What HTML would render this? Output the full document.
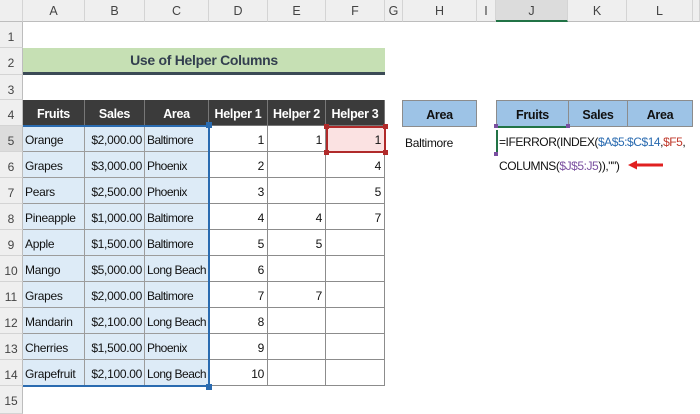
<!DOCTYPE html>
<html><head><style>
*{margin:0;padding:0;box-sizing:border-box}
body{width:700px;height:414px;background:#fff;position:relative;overflow:hidden;font-family:"Liberation Sans",Arial,sans-serif;font-size:12px;letter-spacing:-0.3px;color:#111}
.a{position:absolute}
.ch{position:absolute;top:0;height:22px;background:#efefef;border-right:1px solid #d4d4d4;border-bottom:1px solid #bdbdbd;text-align:center;line-height:22px;color:#444;font-size:12.5px;letter-spacing:0}
.rh{position:absolute;left:0;width:23px;background:#efefef;border-right:1px solid #bdbdbd;border-bottom:1px solid #d4d4d4;text-align:center;color:#444;font-size:12px;letter-spacing:0;padding-top:8px}
.c{position:absolute;height:26px;line-height:28px;border-right:1px solid #8c8c8c;border-bottom:1px solid #8c8c8c;white-space:nowrap;overflow:hidden;padding:0 3px}
.h{background:#3b3b3b;color:#fff;font-weight:bold;text-align:center;font-size:12.5px;border-color:#777}
.b{background:#ddebf7;border-color:#9c9c9c}
.r{text-align:right}
.bh{background:#9dc3e6;font-weight:bold;text-align:center;font-size:12.5px;border:1px solid #8c8c8c}
</style></head><body>
<div class="ch" style="left:0;width:23px"></div>
<div class="ch" style="left:23px;width:62px">A</div>
<div class="ch" style="left:85px;width:60px">B</div>
<div class="ch" style="left:145px;width:64px">C</div>
<div class="ch" style="left:209px;width:59px">D</div>
<div class="ch" style="left:268px;width:58px">E</div>
<div class="ch" style="left:326px;width:59px">F</div>
<div class="ch" style="left:385px;width:18px">G</div>
<div class="ch" style="left:403px;width:74px">H</div>
<div class="ch" style="left:477px;width:19px">I</div>
<div class="ch" style="left:496px;width:72px;background:#dcdcdc;border-bottom:2px solid #217346">J</div>
<div class="ch" style="left:568px;width:59px">K</div>
<div class="ch" style="left:627px;width:66px">L</div>
<div class="ch" style="left:693px;width:7px"></div>

<div class="rh" style="top:22px;height:26px">1</div>
<div class="rh" style="top:48px;height:27px">2</div>
<div class="rh" style="top:75px;height:25px">3</div>
<div class="rh" style="top:100px;height:26px">4</div>
<div class="rh" style="top:126px;height:26px;background:#dcdcdc">5</div>
<div class="rh" style="top:152px;height:26px">6</div>
<div class="rh" style="top:178px;height:26px">7</div>
<div class="rh" style="top:204px;height:26px">8</div>
<div class="rh" style="top:230px;height:26px">9</div>
<div class="rh" style="top:256px;height:26px">10</div>
<div class="rh" style="top:282px;height:26px">11</div>
<div class="rh" style="top:308px;height:26px">12</div>
<div class="rh" style="top:334px;height:26px">13</div>
<div class="rh" style="top:360px;height:26px">14</div>
<div class="rh" style="top:386px;height:28px">15</div>

<div class="a" style="left:23px;top:48px;width:362px;height:24px;background:#c6e0b4;text-align:center;line-height:25px;font-weight:bold;font-size:14px;color:#333f4f">Use of Helper Columns</div>
<div class="a" style="left:23px;top:72px;width:362px;height:3px;background:#3b4a56"></div>

<div class="c h" style="left:23px;top:100px;width:62px">Fruits</div>
<div class="c h" style="left:85px;top:100px;width:60px">Sales</div>
<div class="c h" style="left:145px;top:100px;width:64px">Area</div>
<div class="c h" style="left:209px;top:100px;width:59px;padding:0">Helper 1</div>
<div class="c h" style="left:268px;top:100px;width:58px;padding:0">Helper 2</div>
<div class="c h" style="left:326px;top:100px;width:59px;padding:0">Helper 3</div>

<div id="rows"></div>
<script>
var d=[["Orange","$2,000.00","Baltimore",1,1,1],["Grapes","$3,000.00","Phoenix",2,"",4],["Pears","$2,500.00","Phoenix",3,"",5],["Pineapple","$1,000.00","Baltimore",4,4,7],["Apple","$1,500.00","Baltimore",5,5,""],["Mango","$5,000.00","Long Beach",6,"",""],["Grapes","$2,000.00","Baltimore",7,7,""],["Mandarin","$2,100.00","Long Beach",8,"",""],["Cherries","$1,500.00","Phoenix",9,"",""],["Grapefruit","$2,100.00","Long Beach",10,"",""]];
var x=[23,85,145,209,268,326,385],h="";
d.forEach(function(r,i){var t=126+i*26;r.forEach(function(v,j){var cls="c"+(j<3?" b":"")+(j==1||j>2?" r":"");var st="left:"+x[j]+"px;top:"+t+"px;width:"+(x[j+1]-x[j])+"px;"+(j<3?"padding:0 2px;":"")+(j==2?"letter-spacing:-0.5px;":"");if(i==0&&j==5)st+="background:#fbe2e2;";h+='<div class="'+cls+'" style="'+st+'">'+v+'</div>';});});
document.getElementById("rows").innerHTML=h;
</script>

<div class="a" style="left:23px;top:125px;width:187px;height:262px;border:2px solid #2a6bb0;border-left:none"></div>
<div class="a" style="left:206px;top:122px;width:6px;height:6px;background:#2a6bb0"></div>
<div class="a" style="left:206px;top:384px;width:6px;height:6px;background:#2a6bb0"></div>
<div class="a" style="left:326px;top:126px;width:60px;height:27px;border:2px solid #b02a2a"></div>
<div class="a" style="left:324px;top:124px;width:5px;height:5px;background:#b02a2a"></div>
<div class="a" style="left:383px;top:124px;width:5px;height:5px;background:#b02a2a"></div>
<div class="a" style="left:324px;top:150px;width:5px;height:5px;background:#b02a2a"></div>
<div class="a" style="left:383px;top:150px;width:5px;height:5px;background:#b02a2a"></div>

<div class="c bh" style="left:402px;top:100px;width:75px;height:27px">Area</div>
<div class="a" style="left:405px;top:136px">Baltimore</div>

<div class="c bh" style="left:496px;top:100px;width:73px;height:27px">Fruits</div>
<div class="c bh" style="left:569px;top:100px;width:59px;height:27px;border-left:none">Sales</div>
<div class="c bh" style="left:628px;top:100px;width:65px;height:27px;border-left:none">Area</div>
<div class="a" style="left:496px;top:126px;width:72px;height:2px;background:#217346"></div>
<div class="a" style="left:494px;top:124px;width:4px;height:4px;background:#7a4fa0"></div>
<div class="a" style="left:566px;top:124px;width:4px;height:4px;background:#7a4fa0"></div>
<div class="a" style="left:496px;top:130px;width:2px;height:22px;background:#217346"></div>
<div class="a" style="left:494px;top:152px;width:4px;height:4px;background:#7a4fa0"></div>
<div class="a" style="left:499px;top:135px;font-size:12px;letter-spacing:-0.45px;white-space:nowrap">=IFERROR(INDEX(<span style="color:#2a6bb0">$A$5:$C$14</span>,<span style="color:#c0392b">$F5</span>,</div>
<div class="a" style="left:499px;top:159px;font-size:12px;letter-spacing:-0.45px;white-space:nowrap">COLUMNS(<span style="color:#7a4fa0">$J$5:J5</span>)),"")</div>
<svg class="a" style="left:626px;top:159px" width="40" height="12"><path d="M2 6 L11 1.5 L11 4.5 L37 4.5 L37 7.5 L11 7.5 L11 10.5 Z" fill="#e02020"/></svg>
</body></html>
